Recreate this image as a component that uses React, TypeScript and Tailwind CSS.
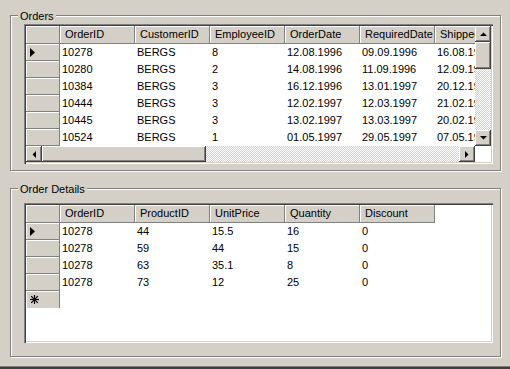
import React from 'react';

const raised =
  'bg-[#d4d0c8] shadow-[inset_-1px_-1px_0_#404040,inset_1px_1px_0_#ffffff,inset_-2px_-2px_0_#808080,inset_2px_2px_0_#d4d0c8]';
const sunken =
  'shadow-[inset_1px_1px_0_#808080,inset_2px_2px_0_#404040,inset_-1px_-1px_0_#ffffff,inset_-2px_-2px_0_#d4d0c8]';
const track =
  'bg-[image:repeating-conic-gradient(#d4d0c8_0%_25%,#ffffff_0%_50%)] bg-size-[2px_2px]';
const headCell =
  'shrink-0 bg-[#d4d0c8] border-r border-b border-[#808080] shadow-[inset_1px_1px_0_#ffffff] pl-[5px] leading-[17px] whitespace-nowrap overflow-hidden';
const rowHead =
  'shrink-0 w-[34px] h-[17px] bg-[#d4d0c8] border-r border-b border-[#808080] shadow-[inset_1px_1px_0_#ffffff] flex items-center';

const orders = [
  ['10278', 'BERGS', '8', '12.08.1996', '09.09.1996', '16.08.1996'],
  ['10280', 'BERGS', '2', '14.08.1996', '11.09.1996', '12.09.1996'],
  ['10384', 'BERGS', '3', '16.12.1996', '13.01.1997', '20.12.1996'],
  ['10444', 'BERGS', '3', '12.02.1997', '12.03.1997', '21.02.1997'],
  ['10445', 'BERGS', '3', '13.02.1997', '13.03.1997', '20.02.1997'],
  ['10524', 'BERGS', '1', '01.05.1997', '29.05.1997', '07.05.1997'],
];

const details = [
  ['10278', '44', '15.5', '16', '0'],
  ['10278', '59', '44', '15', '0'],
  ['10278', '63', '35.1', '8', '0'],
  ['10278', '73', '12', '25', '0'],
];

function Pointer() {
  return (
    <svg width="5" height="9" viewBox="0 0 5 9" className="ml-[4px]">
      <polygon points="0,0 5,4.5 0,9" fill="#000" />
    </svg>
  );
}

function Star() {
  return (
    <svg width="9" height="9" viewBox="0 0 9 9" className="ml-[4px]" stroke="#000" strokeWidth="1.2">
      <line x1="4.5" y1="0" x2="4.5" y2="9" />
      <line x1="0" y1="4.5" x2="9" y2="4.5" />
      <line x1="1.2" y1="1.2" x2="7.8" y2="7.8" />
      <line x1="7.8" y1="1.2" x2="1.2" y2="7.8" />
    </svg>
  );
}

function Arrow({ dir }: { dir: 'up' | 'down' | 'left' | 'right' }) {
  const pts = {
    up: '0,4 7,4 3.5,0.5',
    down: '0,0 7,0 3.5,3.5',
    left: '4,0 4,7 0.5,3.5',
    right: '0,0 0,7 3.5,3.5',
  }[dir];
  const vertical = dir === 'up' || dir === 'down';
  return (
    <svg width={vertical ? 7 : 4} height={vertical ? 4 : 7} viewBox={vertical ? '0 0 7 4' : '0 0 4 7'}>
      <polygon points={pts} fill="#000" />
    </svg>
  );
}

function GroupBox({ title, children, className }: { title: string; children: React.ReactNode; className: string }) {
  return (
    <div className={`relative ml-[10px] w-[491px] border border-[#808080] shadow-[inset_1px_1px_0_#ffffff,1px_1px_0_#ffffff] ${className}`}>
      <span className="absolute -top-[7px] left-[7px] bg-[#d4d0c8] px-[2px] leading-[14px]">{title}</span>
      {children}
    </div>
  );
}

export default function App() {
  const orderCols = ['OrderID', 'CustomerID', 'EmployeeID', 'OrderDate', 'RequiredDate', 'ShippedDate'];
  const detailCols = ['OrderID', 'ProductID', 'UnitPrice', 'Quantity', 'Discount'];

  return (
    <div className="w-[510px] h-[369px] bg-[#d4d0c8] flex flex-col text-[11px] text-black font-['Liberation_Sans',Arial,sans-serif] overflow-hidden">
      <GroupBox title="Orders" className="mt-[15px] h-[156px] pt-[8px] pl-[13px]">
        <div className={`w-[469px] h-[140px] p-[2px] bg-white ${sunken}`}>
          <div className="flex h-[120px]">
            <div className="w-[449px] overflow-hidden">
              <div className="flex h-[18px]">
                <div className={`${headCell} w-[34px]`} />
                {orderCols.map((c) => (
                  <div key={c} className={`${headCell} w-[75px]`}>{c}</div>
                ))}
              </div>
              {orders.map((r, i) => (
                <div key={i} className="flex h-[17px]">
                  <div className={rowHead}>{i === 0 && <Pointer />}</div>
                  {r.map((v, j) => (
                    <div key={j} className="shrink-0 w-[75px] pl-[2px] leading-[17px] whitespace-nowrap overflow-hidden">{v}</div>
                  ))}
                </div>
              ))}
            </div>
            <div className="w-[16px] flex flex-col">
              <div className={`${raised} h-[16px] flex items-center justify-center`}><Arrow dir="up" /></div>
              <div className={`${raised} h-[27px]`} />
              <div className={`flex-1 ${track}`} />
              <div className={`${raised} h-[16px] flex items-center justify-center`}><Arrow dir="down" /></div>
            </div>
          </div>
          <div className="flex h-[16px]">
            <div className="w-[449px] flex">
              <div className={`${raised} w-[16px] flex items-center justify-center`}><Arrow dir="left" /></div>
              <div className={`${raised} w-[164px]`} />
              <div className={`flex-1 ${track}`} />
              <div className={`${raised} w-[16px] flex items-center justify-center`}><Arrow dir="right" /></div>
            </div>
            <div className="w-[16px] bg-white" />
          </div>
        </div>
      </GroupBox>

      <GroupBox title="Order Details" className="mt-[17px] h-[169px] pt-[14px] pl-[13px]">
        <div className={`w-[469px] h-[140px] p-[2px] bg-white ${sunken}`}>
          <div className="flex h-[18px]">
            <div className={`${headCell} w-[34px]`} />
            {detailCols.map((c) => (
              <div key={c} className={`${headCell} w-[75px]`}>{c}</div>
            ))}
          </div>
          {details.map((r, i) => (
            <div key={i} className="flex h-[17px]">
              <div className={rowHead}>{i === 0 && <Pointer />}</div>
              {r.map((v, j) => (
                <div key={j} className="shrink-0 w-[75px] pl-[2px] leading-[17px] whitespace-nowrap">{v}</div>
              ))}
            </div>
          ))}
          <div className="flex h-[17px]">
            <div className="w-[34px] h-[17px] bg-[#d4d0c8] border-r border-[#808080] shadow-[inset_1px_1px_0_#ffffff] flex items-center">
              <Star />
            </div>
          </div>
        </div>
      </GroupBox>

      <div className="flex-1" />
      <div className="h-[3px] border-t border-[#808080] bg-[#404040]" />
    </div>
  );
}
